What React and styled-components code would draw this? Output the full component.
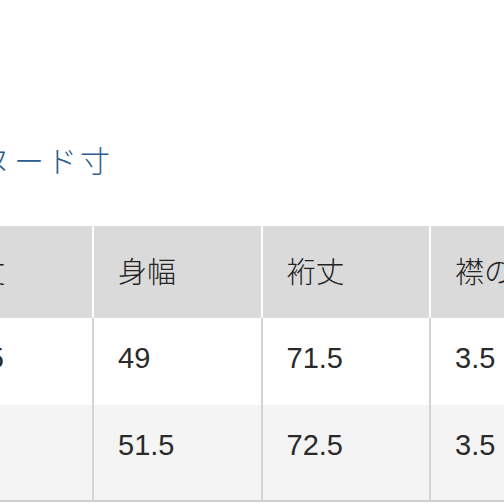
import React from "react";
import styled, { createGlobalStyle } from "styled-components";

const GlobalStyle = createGlobalStyle`
  html, body {
    margin: 0;
    padding: 0;
    background: #fff;
  }
  body {
    font-family: "Liberation Sans", "Noto Sans CJK JP", sans-serif;
    overflow: hidden;
  }
`;

const Page = styled.div`
  width: 504px;
  height: 504px;
  overflow: hidden;
  padding-top: 142px;
  box-sizing: border-box;
`;

const Title = styled.h2`
  margin: 0 0 0 -19px;
  font-family: "Noto Sans CJK JP", sans-serif;
  font-weight: 300;
  font-size: 30px;
  line-height: 34px;
  letter-spacing: 3px;
  color: #2b5c8d;
  white-space: nowrap;
`;

const Table = styled.div`
  margin-top: 50px;
  margin-left: -76.5px;
  display: grid;
  grid-template-columns: repeat(4, 168.5px);
`;

const HeadCell = styled.div`
  height: 92px;
  box-sizing: border-box;
  padding: 24px 0 0 24px;
  background: #dadada;
  border-left: ${(p) => (p.$first ? "none" : "2px solid #fff")};
  font-family: "Noto Sans CJK JP", sans-serif;
  font-weight: 300;
  font-size: 29px;
  line-height: 40px;
  color: #222;
  white-space: nowrap;
  overflow: ${(p) => (p.$last ? "visible" : "hidden")};
`;

const Cell = styled.div`
  height: ${(p) => (p.$tall ? "97px" : "87px")};
  box-sizing: border-box;
  padding: 24px 0 0 24px;
  background: ${(p) => (p.$alt ? "#f4f4f4" : "#fff")};
  border-left: ${(p) => (p.$first ? "none" : "2px solid #d4d4d4")};
  border-bottom: ${(p) => (p.$tall ? "2px solid #cfcfcf" : "none")};
  font-size: 29px;
  line-height: 32px;
  color: #2a2a2a;
  white-space: nowrap;
`;

const headers = ["着丈", "身幅", "裄丈", "襟の高さ"];
const rows = [
  ["67.5", "49", "71.5", "3.5"],
  ["69", "51.5", "72.5", "3.5"],
];

export default function App() {
  return (
    <>
      <GlobalStyle />
      <Page>
        <Title>ヌード寸</Title>
        <Table>
          {headers.map((h, i) => (
            <HeadCell key={h} $first={i === 0} $last={i === headers.length - 1}>
              {h}
            </HeadCell>
          ))}
          {rows.map((row, r) =>
            row.map((v, i) => (
              <Cell key={r + "-" + i} $first={i === 0} $alt={r === 1} $tall={r === 1}>
                {v}
              </Cell>
            ))
          )}
        </Table>
      </Page>
    </>
  );
}
